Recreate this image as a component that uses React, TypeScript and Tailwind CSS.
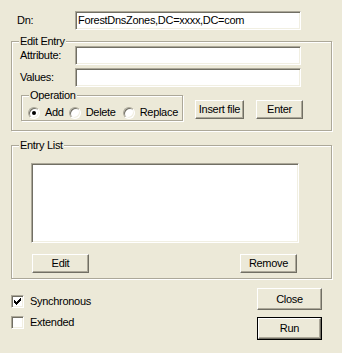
import React from "react";

const sunken =
  "border border-t-[#ACA899] border-l-[#ACA899] border-r-white border-b-white shadow-[inset_1px_1px_0_#716F64,inset_-1px_-1px_0_#F1EFE2] bg-white";
const raised =
  "border border-t-white border-l-white border-r-[#716F64] border-b-[#716F64] shadow-[inset_-1px_-1px_0_#ACA899] bg-[#ECE9D8] flex items-center justify-center";
const groupBox =
  "border border-[#ACA899] shadow-[inset_1px_1px_0_#fff,1px_1px_0_#fff] m-0 p-0 min-w-0";

function Input({ w, value }: { w: string; value?: string }) {
  return (
    <div className={`${sunken} ${w} h-[19px] flex items-center pl-[2px] overflow-hidden whitespace-nowrap`}>
      {value}
    </div>
  );
}

function Button({ className, children }: { className: string; children: React.ReactNode }) {
  return <div className={`${raised} ${className}`}>{children}</div>;
}

function Radio({ checked, label, ml }: { checked?: boolean; label: string; ml: string }) {
  return (
    <div className={`flex items-center ${ml}`}>
      <div className="w-[12px] h-[12px] rounded-full border border-t-[#ACA899] border-l-[#ACA899] border-r-white border-b-white shadow-[inset_1px_1px_0_#716F64,inset_-1px_-1px_0_#F1EFE2] bg-white flex items-center justify-center">
        {checked && <div className="w-[4px] h-[4px] rounded-full bg-black" />}
      </div>
      <span className="ml-[5px]">{label}</span>
    </div>
  );
}

function Check({ checked, label }: { checked?: boolean; label: string }) {
  return (
    <div className="flex items-center">
      <div className={`${sunken} w-[13px] h-[13px] flex items-center justify-center`}>
        {checked && (
          <svg width="7" height="7" viewBox="0 0 7 7" shapeRendering="crispEdges">
            <path
              d="M6 0h1v1h-1z M5 1h2v1h-2z M0 2h1v1h-1z M4 2h3v1h-3z M0 3h2v1h-2z M3 3h3v1h-3z M0 4h5v1h-5z M1 5h3v1h-3z M2 6h1v1h-1z"
              fill="#000"
            />
          </svg>
        )}
      </div>
      <span className="ml-[6px]">{label}</span>
    </div>
  );
}

export default function App() {
  return (
    <div className="w-[342px] h-[353px] bg-[#ECE9D8] text-black font-['Liberation_Sans',Arial,sans-serif] text-[11px] leading-[13px] tracking-[-0.3px] pt-[11px] pl-[11px] pr-[10px] overflow-hidden">
      <div className="flex items-center">
        <div className="w-[64px] pl-[6px]">Dn:</div>
        <Input w="w-[226px]" value="ForestDnsZones,DC=xxxx,DC=com" />
      </div>

      <fieldset className={`${groupBox} mt-[5px]`}>
        <legend className="ml-[7px] px-[1px] bg-[#ECE9D8]">Edit Entry</legend>
        <div className="-mt-[2px] flex flex-col gap-[3px]">
          <div className="flex items-center">
            <div className="w-[63px] pl-[8px]">Attribute:</div>
            <Input w="w-[226px]" />
          </div>
          <div className="flex items-center">
            <div className="w-[63px] pl-[8px]">Values:</div>
            <Input w="w-[226px]" />
          </div>
        </div>
        <div className="flex items-start mt-[2px] pb-[9px]">
          <fieldset className={`${groupBox} ml-[9px] w-[162px] h-[32px]`}>
            <legend className="ml-[7px] px-[1px] bg-[#ECE9D8]">Operation</legend>
            <div className="flex items-center mt-[4px] whitespace-nowrap overflow-hidden">
              <Radio checked label="Add" ml="ml-[6px]" />
              <Radio label="Delete" ml="ml-[5px]" />
              <Radio label="Replace" ml="ml-[7px]" />
            </div>
          </fieldset>
          <Button className="ml-[12px] mt-[11px] w-[49px] h-[19px]">Insert file</Button>
          <Button className="ml-[12px] mt-[11px] w-[47px] h-[19px]">Enter</Button>
        </div>
      </fieldset>

      <fieldset className={`${groupBox} mt-[8px]`}>
        <legend className="ml-[7px] px-[1px] bg-[#ECE9D8]">Entry List</legend>
        <div className={`${sunken} ml-[19px] mt-[11px] w-[268px] h-[80px]`} />
        <div className="flex justify-between mt-[11px] pb-[5px] pl-[20px] pr-[34px]">
          <Button className="w-[57px] h-[19px]">Edit</Button>
          <Button className="w-[57px] h-[19px]">Remove</Button>
        </div>
      </fieldset>

      <div className="flex justify-between">
        <div className="flex flex-col gap-[8px] pt-[16px]">
          <Check checked label="Synchronous" />
          <Check label="Extended" />
        </div>
        <div className="flex flex-col mr-[10px] pt-[9px]">
          <Button className="w-[65px] h-[22px]">Close</Button>
          <div className="mt-[7px] border border-black">
            <Button className="w-[63px] h-[21px]">Run</Button>
          </div>
        </div>
      </div>
    </div>
  );
}
